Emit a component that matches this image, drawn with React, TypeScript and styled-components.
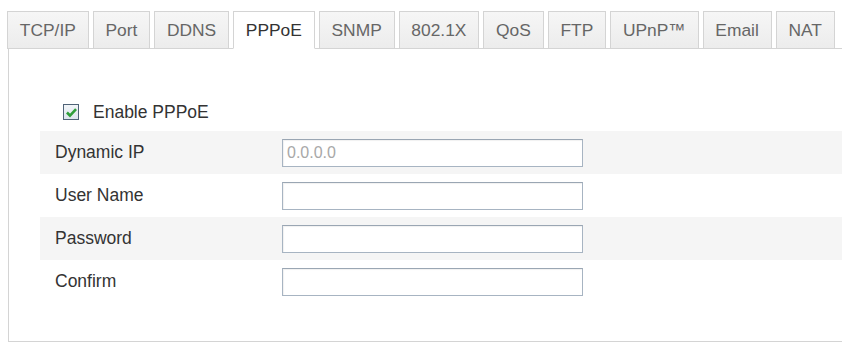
import React, { useState } from 'react';
import styled, { createGlobalStyle } from 'styled-components';

// PPPoE 설정 화면

const GlobalStyle = createGlobalStyle`
	html, body {
		margin: 0;
		padding: 0;
		background: #ffffff;
	}
	body {
		font-family: 'Liberation Sans', Arial, sans-serif;
	}
`;

const TABS = ['TCP/IP', 'Port', 'DDNS', 'PPPoE', 'SNMP', '802.1X', 'QoS', 'FTP', 'UPnP™', 'Email', 'NAT'];

const FIELDS = [
	{ label: 'Dynamic IP', value: '0.0.0.0', disabled: true },
	{ label: 'User Name', value: '' },
	{ label: 'Password', value: '', type: 'password' },
	{ label: 'Confirm', value: '', type: 'password' },
];

const App = () => {
	const [active, setActive] = useState('PPPoE');
	const [enabled, setEnabled] = useState(true);

	return (
		<React.Fragment>
			<GlobalStyle />
			<Page>
				<TabBar>
					{TABS.map((t) => (
						<Tab key={t} $active={t === active} onClick={() => setActive(t)}>
							{t}
						</Tab>
					))}
				</TabBar>
				<Panel>
					<CheckRow onClick={() => setEnabled(!enabled)}>
						<CheckBox>
							{enabled && (
								<svg width="13" height="13" viewBox="0 0 12 12">
									<path d="M1.8 6 L4.6 8.8 L10.2 2.8" fill="none" stroke="#2f9e3a" strokeWidth="2.4" />
								</svg>
							)}
						</CheckBox>
						<span>Enable PPPoE</span>
					</CheckRow>
					{FIELDS.map((f, i) => (
						<Row key={f.label} $shaded={i % 2 === 0}>
							<Label>{f.label}</Label>
							<Field type={f.type || 'text'} defaultValue={f.value} disabled={f.disabled} />
						</Row>
					))}
				</Panel>
			</Page>
		</React.Fragment>
	);
};

export default App;

const Page = styled.div`
	width: 843px;
	height: 345px;
	padding: 11px 0 0 7px;
	box-sizing: border-box;
	overflow: hidden;
`;

const TabBar = styled.div`
	display: flex;
	gap: 4px;
	position: relative;
	z-index: 1;
`;

const Tab = styled.div<{ $active?: boolean }>`
	height: 38px;
	box-sizing: border-box;
	padding: 0 11.8px;
	display: flex;
	align-items: center;
	font-size: 17.4px;
	color: ${(p) => (p.$active ? '#333333' : '#666666')};
	background: ${(p) => (p.$active ? '#ffffff' : 'linear-gradient(#f6f6f6, #ececec)')};
	border: 1px solid #d4d4d4;
	border-bottom: ${(p) => (p.$active ? '1px solid #ffffff' : '1px solid #d4d4d4')};
	cursor: pointer;
	white-space: nowrap;
`;

const Panel = styled.div`
	margin-top: -1px;
	margin-left: 1px;
	width: 834px;
	height: 294px;
	box-sizing: border-box;
	border: 1px solid #d4d4d4;
	border-right: none;
	padding: 52px 0 0 31px;
`;

const CheckRow = styled.label`
	display: flex;
	align-items: center;
	gap: 14px;
	height: 22px;
	margin: 0 0 8px 23px;
	font-size: 17.5px;
	color: #333333;
	cursor: pointer;
`;

const CheckBox = styled.span`
	width: 16px;
	height: 16px;
	box-sizing: border-box;
	border: 1px solid #4f6377;
	background: linear-gradient(#f2f5f8, #dde5ee);
	display: flex;
	align-items: center;
	justify-content: center;
`;

const Row = styled.div<{ $shaded?: boolean }>`
	display: flex;
	align-items: center;
	height: 43px;
	background: ${(p) => (p.$shaded ? '#f5f5f5' : 'transparent')};
`;

const Label = styled.div`
	width: 242px;
	padding-left: 15px;
	box-sizing: border-box;
	font-size: 17.5px;
	color: #333333;
`;

const Field = styled.input`
	width: 301px;
	height: 28px;
	box-sizing: border-box;
	border: 1px solid #a7b4c2;
	border-top-color: #9aa6b3;
	box-shadow: inset 1px 1px 1px rgba(0, 0, 0, 0.06);
	background: #ffffff;
	padding: 0 4px;
	font-family: 'Liberation Sans', Arial, sans-serif;
	font-size: 16px;
	color: #333333;
	outline: none;

	&:disabled {
		color: #a8a8a8;
		background: #ffffff;
	}
`;
